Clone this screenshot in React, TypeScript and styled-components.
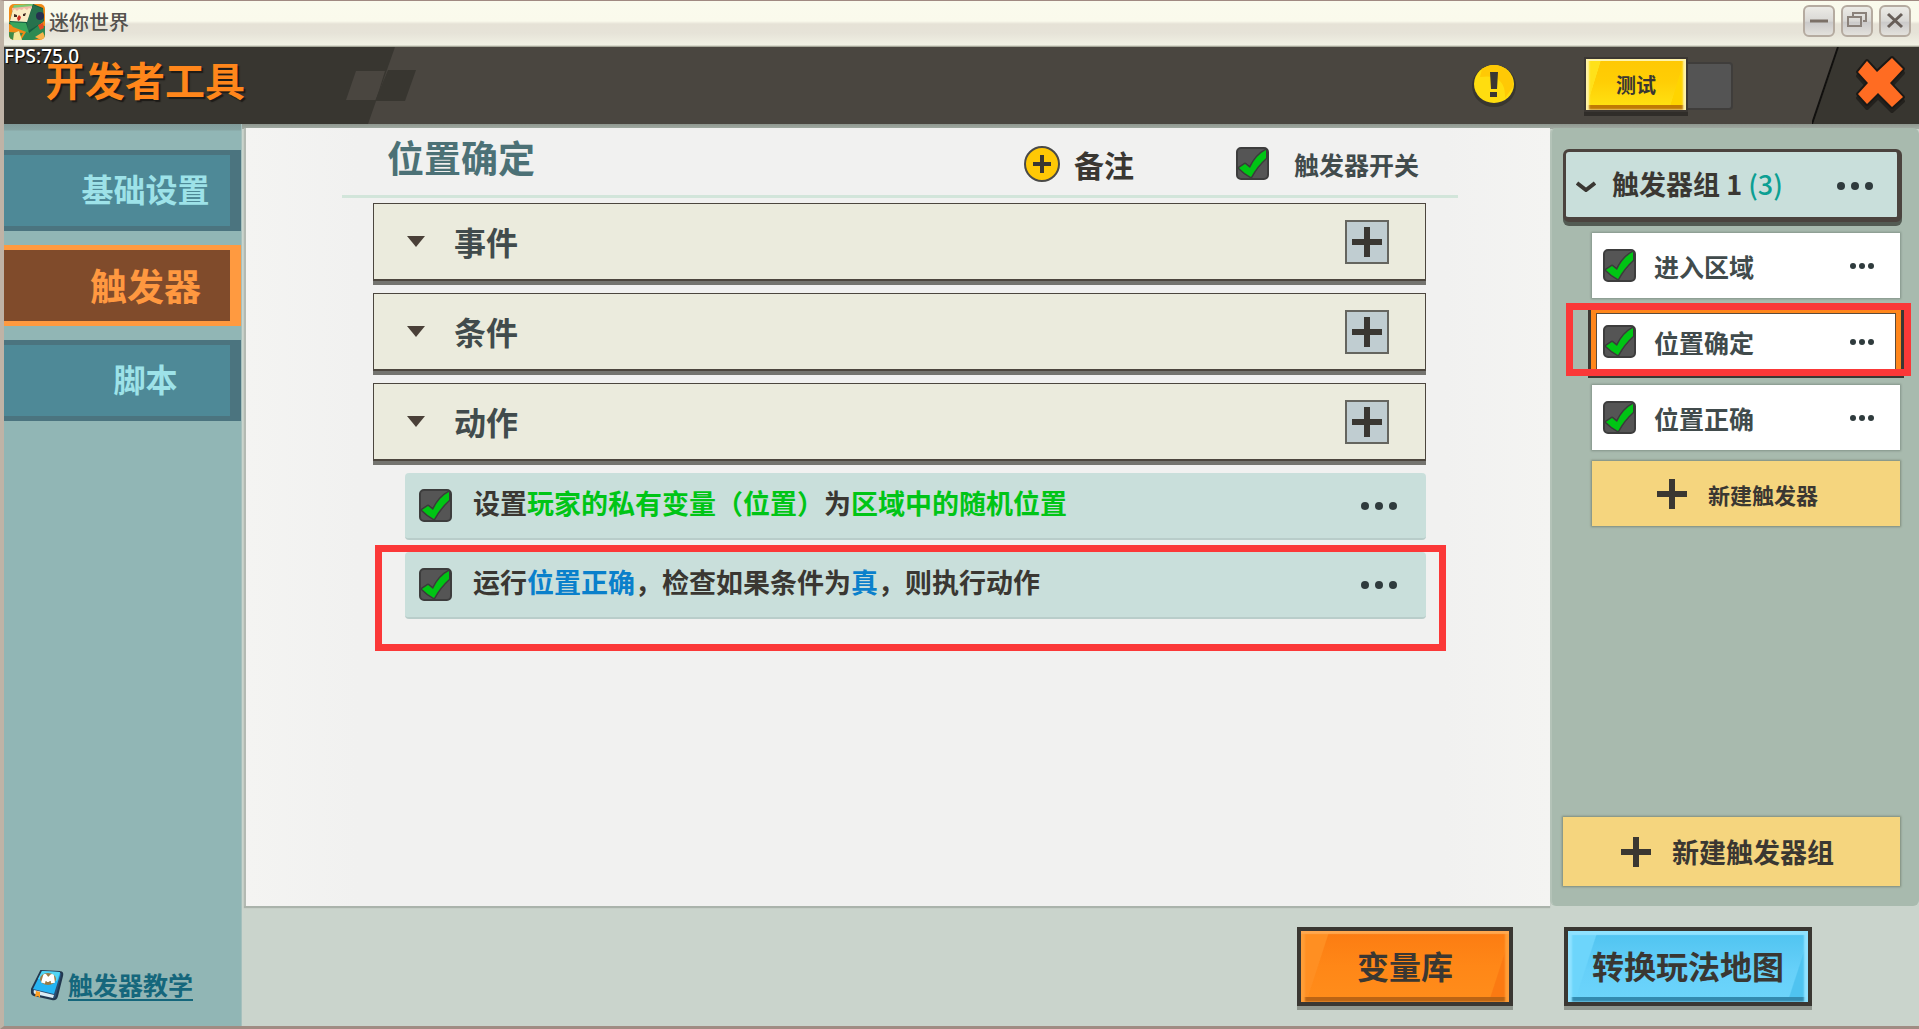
import React from "react";
import styled, { createGlobalStyle, css } from "styled-components";

const INK = "#3a3732";
const SLATE = "#414b4c";

const GlobalStyle = createGlobalStyle`
  * { box-sizing: border-box; }
  html, body { margin: 0; padding: 0; }
  body {
    font-family: "Noto Sans CJK SC", "Noto Sans", sans-serif;
    font-weight: 700;
    color: ${INK};
  }
  button, input { font: inherit; color: inherit; margin: 0; }
  button { padding: 0; border: 0; background: none; cursor: pointer; }
  h1, h2, h3, p, ul { margin: 0; padding: 0; font-size: inherit; font-weight: inherit; }
  ul { list-style: none; }
  svg { display: block; flex: none; }
`;

/* ---------- window frame ---------- */

const Window = styled.div`
  min-height: 100vh;
  display: flex;
  flex-direction: column;
  border-top: 1px solid #a08a82;
  border-left: 4px solid #bfb3a6;
  border-bottom: 3px solid #a08c83;
  background: #cad4cc;
`;

const TitleBar = styled.header`
  height: 46px;
  display: flex;
  align-items: flex-start;
  padding: 3px 8px 0 5px;
  background: linear-gradient(#fafbed 0, #fafaec 20px, #e6e2d6 23px, #e6e3d8 32px, #f1f1e4 44px, #8d8f80 46px);
`;

const WindowName = styled.span`
  flex: 1;
  padding-left: 4px;
  font-size: 20px;
  line-height: 36px;
  font-weight: 500;
  color: #55524e;
`;

const WindowButtons = styled.div`
  display: flex;
  gap: 6px;
  padding-top: 1px;
`;

const WindowButton = styled.button`
  width: 32px;
  height: 32px;
  display: grid;
  place-items: center;
  border: 2px solid #b5aba0;
  border-radius: 6px;
  background: linear-gradient(#ecebe6, #d9d8d5 50%, #cbcaca 55%, #e3e1dc);
`;

/* ---------- tool header ---------- */

const ToolHeader = styled.div`
  position: relative;
  height: 77px;
  display: flex;
  background: #4a4640;
`;

const Fps = styled.span`
  position: absolute;
  left: 0;
  top: -2px;
  font-family: "Noto Sans", sans-serif;
  font-size: 19px;
  line-height: 22px;
  font-weight: 500;
  color: #fff;
  text-shadow: 1px 1px 1px #000;
`;

const Brand = styled.h1`
  width: 342px;
  padding-left: 41px;
  font-size: 40px !important;
  line-height: 64px;
  color: #ff861b;
  background: #383630;
  text-shadow: 2px 2px 1px #1d1b18;
`;

const HeaderTools = styled.div`
  flex: 1;
  display: flex;
  justify-content: flex-end;
  align-items: flex-start;
`;

const NoticeButton = styled.button`
  margin: 16px 68px 0 0;
`;

const TestSwitch = styled.div`
  display: flex;
  align-items: flex-start;
  padding-top: 10px;
  margin-right: 79px;
`;

const TestButton = styled.button`
  width: 104px;
  height: 55px;
  border: 2px solid #3b3733;
  box-shadow: inset 0 2px 0 #fff3a8, inset 3px 0 2px #fff3a8, inset -3px 0 2px #fff3a8, inset 0 -5px 0 #c07a04, 0 4px 0 #302d29;
  background: linear-gradient(107deg, #ffe11a 0 13%, transparent 13.5% 85%, #ffd400 85.5%),
    linear-gradient(#ffc803, #ffce05 45%, #ffe011 90%);
  font-size: 20px;
  line-height: 50px;
`;

const SwitchSlot = styled.span`
  width: 45px;
  height: 48px;
  margin-top: 5px;
  border: 2px solid #3f3d3b;
  border-left: 0;
  border-radius: 0 4px 4px 0;
  background: #545454;
`;

const CloseCell = styled.div`
  width: 79px;
  padding: 7px 0 0 14px;
  background: #383630;
`;

/* ---------- body ---------- */

const Body = styled.div`
  flex: 1;
  display: flex;
  background: linear-gradient(#8f978f, #a3ada5 5px, transparent 5px);
`;

const Sidebar = styled.nav`
  width: 238px;
  display: flex;
  flex-direction: column;
  justify-content: space-between;
  padding: 26px 0 25px;
  border-right: 1px solid #a5c0bd;
  background: linear-gradient(#819b99, #87a5a3 6px, #91b6b5 7px);
`;

const Tabs = styled.div`
  display: grid;
  gap: 14px;
`;

const Tab = styled.button<{ $active?: boolean }>`
  height: 81px;
  padding: 0 20px 6px 77px;
  border: solid #4b747f;
  border-width: 5px 11px 5px 0;
  background: #4e8997;
  color: #9de2e8;
  font-size: 32px;
  line-height: 64px;
  text-align: center;
  white-space: nowrap;
  ${(p) =>
    p.$active &&
    css`
      padding-bottom: 2px;
      border-color: #ff9a40;
      background: #804b2b;
      color: #ff9840;
      font-size: 37px;
    `}
`;

const GuideLink = styled.a`
  display: flex;
  align-items: center;
  gap: 4px;
  padding-left: 27px;
  color: #15677c;
  font-size: 25px;
  line-height: 30px;
  text-decoration: none;
  span { border-bottom: 2px solid #15677c; }
`;

const Workspace = styled.div`
  flex: 1;
  min-width: 0;
  display: flex;
  flex-direction: column;
`;

const Panels = styled.div`
  flex: 1;
  display: flex;
  padding-top: 4px;
`;

const Editor = styled.main`
  flex: 1;
  min-width: 0;
  margin-left: 2px;
  padding: 0 92px 0 96px;
  border-left: 2px solid #b3bab3;
  box-shadow: 0 2px 1px #aab3ab;
  background: linear-gradient(90deg, #f4f4f2, #f1f1f0 112px, #f1f1f0 1199px, #f4f4f2);
`;

const EditorHead = styled.div`
  height: 70px;
  display: flex;
  align-items: center;
  padding: 4px 39px 0 45px;
  border-bottom: 3px solid #d2e5da;
`;

const EditorTitle = styled.h2`
  flex: 1;
  align-self: flex-start;
  font-size: 37px !important;
  line-height: 50px;
  color: #4c7176;
`;

const NoteButton = styled.button`
  display: flex;
  align-items: center;
  gap: 14px;
  margin-right: 102px;
  font-size: 30px;
  line-height: 36px;
`;

const SwitchLabel = styled.label`
  display: flex;
  align-items: center;
  gap: 25px;
  font-size: 25px;
  line-height: 32px;
  color: ${SLATE};
`;

const Sections = styled.div`
  display: grid;
  gap: 12px;
  padding: 5px 32px 0 31px;
`;

const Section = styled.section`
  height: 78px;
  display: flex;
  align-items: center;
  padding: 0 36px 0 33px;
  border: 1px solid #4c463e;
  border-bottom-width: 2px;
  background: #ebebdd;
  box-shadow: 0 4px 0 #74746f;
`;

const SectionName = styled.h3`
  flex: 1;
  padding: 0 0 2px 29px;
  font-size: 32px !important;
  line-height: 40px;
  color: ${SLATE};
`;

const AddButton = styled.button`
  width: 44px;
  height: 44px;
  display: grid;
  place-items: center;
  border: 2px solid #65655f;
  background: #c0cdd1;
`;

const Actions = styled.ul`
  display: grid;
  gap: 12px;
  padding-left: 32px;
`;

const Action = styled.li`
  position: relative;
  height: 67px;
  display: flex;
  align-items: center;
  padding: 0 29px 0 14px;
  border-radius: 4px;
  border-bottom: 2px solid #b9cdca;
  background: #c9dfdb;
`;

const ActionText = styled.label`
  flex: 1;
  padding: 0 0 6px 21px;
  font-size: 27px;
  line-height: 36px;
`;

const Word = styled.span<{ $tone: "green" | "blue" }>`
  color: ${(p) => (p.$tone === "green" ? "#00c516" : "#0a80cb")};
`;

const Highlight = styled.i<{ $inset: string }>`
  position: absolute;
  inset: ${(p) => p.$inset};
  z-index: 2;
  border: 7px solid #fb3838;
  pointer-events: none;
`;

const MoreButton = styled.button`
  display: grid;
  place-items: center;
  height: 32px;
`;

/* ---------- trigger list ---------- */

const Triggers = styled.aside`
  width: 369px;
  display: flex;
  flex-direction: column;
  padding: 21px 19px 20px 11px;
  border-radius: 6px;
  border-left: 2px solid #b4c3b8;
  background: #a8baae;
`;

const Group = styled.div`
  height: 73px;
  display: flex;
  align-items: center;
  padding: 3px 24px 0 10px;
  margin-right: -2px;
  border: solid #4b433e;
  border-width: 3px 5px 5px 3px;
  border-radius: 6px;
  background: #c9dfdb;
  box-shadow: 0 4px 0 #535b53;
`;

const GroupName = styled.h3`
  flex: 1;
  padding: 0 0 4px 16px;
  font-size: 27px !important;
  line-height: 36px;
  span { color: #0c9f93; font-weight: 500; }
`;

const TriggerItems = styled.ul`
  display: grid;
  gap: 11px;
  padding: 11px 0 0 29px;
`;

const TriggerItem = styled.li<{ $selected?: boolean }>`
  position: relative;
  height: 65px;
  display: flex;
  align-items: center;
  padding: 0 26px 0 11px;
  background: #fff;
  box-shadow: 0 0 2px 1px #84948a;
  ${(p) =>
    p.$selected &&
    css`
      box-shadow: 0 0 0 1px #ff861b, 0 0 0 4px #3b3833, inset 0 0 0 4px #ff861b, inset 0 0 0 5px #5c4b3b;
    `}
`;

const TriggerName = styled.label`
  flex: 1;
  padding-left: 18px;
  font-size: 25px;
  line-height: 34px;
  color: ${SLATE};
`;

const NewButton = styled.button<{ $large?: boolean }>`
  display: flex;
  align-items: center;
  width: 100%;
  gap: 21px;
  height: ${(p) => (p.$large ? 69 : 65)}px;
  padding-left: ${(p) => (p.$large ? 58 : 65)}px;
  background: #f5d57e;
  box-shadow: 0 0 2px 1px #7f8c7c;
  font-size: ${(p) => (p.$large ? 27 : 22)}px;
  line-height: 36px;
`;

const Spacer = styled.div`
  flex: 1;
`;

/* ---------- footer ---------- */

const Footer = styled.footer`
  height: 120px;
  display: flex;
  justify-content: flex-end;
  align-items: flex-start;
  gap: 51px;
  padding: 21px 107px 0 0;
`;

const GlossButton = styled.button<{ $tone: "orange" | "blue" }>`
  height: 79px;
  padding: 0 ${(p) => (p.$tone === "orange" ? 56 : 24)}px 4px;
  border: 4px solid ${INK};
  font-size: 32px;
  line-height: 64px;
  ${(p) =>
    p.$tone === "orange"
      ? css`
          background: linear-gradient(108deg, #ff8f22 0 12%, transparent 12.5% 91%, #fb7a12 91.5%),
            linear-gradient(#fc7c12, #ff8717 50%, #ff8d1b);
          box-shadow: inset 0 3px 1px #ffa84f, inset 4px 0 2px #ff9d36, inset -4px 0 2px #ff9d36, inset 0 -5px 0 #bb6414, 0 4px 0 #90978f;
        `
      : css`
          background: linear-gradient(108deg, #6dd5fb 0 11%, transparent 11.5% 92%, #4fc3f0 92.5%),
            linear-gradient(#4fc3f0, #66d0f9 55%, #6dd5fb);
          box-shadow: inset 0 4px 1px #8fe2ff, inset 4px 0 2px #8fe2ff, inset -4px 0 2px #8fe2ff, inset 0 -5px 0 #338bb0, 0 4px 0 #90978f;
        `}
`;

/* ---------- small drawings and controls ---------- */

const CheckWrap = styled.span`
  width: 33px;
  height: 33px;
  flex: none;
  display: grid;
  > * { grid-area: 1 / 1; }
  svg { pointer-events: none; }
`;

const CheckInput = styled.input`
  appearance: none;
  width: 33px;
  height: 33px;
  border: 2px solid #3d3d3d;
  border-radius: 5px;
  background: #555;
  &:not(:checked) + svg { visibility: hidden; }
`;

function Check({ id }: { id: string }) {
  return (
    <CheckWrap>
      <CheckInput type="checkbox" id={id} defaultChecked />
      <svg width="33" height="33" viewBox="0 0 33 33" aria-hidden="true">
        <path d="M3 21 L9 17 L14 21 Q20 8 30 3 L30 11 Q21 19 15 30 Q9 27 3 21Z" fill="#00c514" stroke="#3b3b3b" strokeWidth="3" strokeLinejoin="round" paintOrder="stroke" />
      </svg>
    </CheckWrap>
  );
}

function Dots({ r = 4, pitch = 14 }: { r?: number; pitch?: number }) {
  const w = pitch * 2 + r * 2;
  return (
    <svg width={w} height={r * 2} aria-hidden="true" fill="#2f3b3d">
      {[0, 1, 2].map((i) => (
        <circle key={i} cx={r + pitch * i} cy={r} r={r} />
      ))}
    </svg>
  );
}

function Plus() {
  return (
    <svg width="30" height="30" viewBox="0 0 30 30" aria-hidden="true">
      <path d="M0 15H30M15 0V30" stroke={INK} strokeWidth="6" />
    </svg>
  );
}

function Avatar() {
  return (
    <svg width="36" height="36" viewBox="0 0 36 36" aria-hidden="true">
      <defs>
        <clipPath id="avatarClip">
          <rect width="36" height="36" rx="5" />
        </clipPath>
      </defs>
      <g clipPath="url(#avatarClip)">
        <rect width="36" height="36" fill="#f08a17" />
        <path d="M0 28L14 29L10 36H0Z" fill="#3e8b49" />
        <path d="M22 20L36 22V33L24 36H12Z" fill="#2c8a52" />
        <path d="M5 2L24 0L34 4L35 17L20 29L16 24L0 20Z" fill="#145c41" />
        <path d="M24 1L34 5V18L19 27L18 19Z" fill="#27724d" />
        <path d="M5 1L24 0L22 5L3 6Z" fill="#7acb72" />
        <path d="M4 5L23 3L18 18L1 17Z" fill="#f9ecc4" />
        <path d="M3 4L23 2L22 5l-2-1-2 2-3-2-2 2-3-1-2 2-2-2-3 2Z" fill="#f2b9a4" />
        <path d="M5 10l3 1v2H5ZM14 10l3-1-1 3h-2Z" fill="#402a22" />
        <path d="M8 14l2-3 2 2-1 3-2 1Z" fill="#cf2f24" />
        <path d="M0 18L17 19L20 29L4 23Z" fill="#38a65d" />
        <path d="M5 29l5-2 3 9H4Z" fill="#f4e79a" />
        <circle cx="31" cy="12" r="4" fill="#26304f" />
        <path d="M29 21l5-2 1 5-4 2Z" fill="#e24a22" />
        <path d="M26 33l8-5 2 5-4 3Z" fill="#f7b44c" />
      </g>
    </svg>
  );
}

function GuideBook() {
  return (
    <svg width="33" height="32" viewBox="0 0 33 32" aria-hidden="true">
      <path d="M10 2L29 3Q32 3 31 7L26 27Q25 31 21 30L3 26Q0 25 1 20Z" fill="#2b4d72" stroke="#22374e" strokeWidth="2" />
      <path d="M3 21L23 26L22 29L4 25Q2 24 3 21Z" fill="#dcecf4" />
      <path d="M11 2L28 3Q30 4 29 6L23 25L2 20Z" fill="#25b4f3" />
      <path d="M11 2L29 3L26 12L7 10Z" fill="#52d5f4" />
      <ellipse cx="17" cy="10" rx="8" ry="6" fill="#9c7a44" />
      <path d="M12 14L14 7L17 11L21 7L22 14" fill="none" stroke="#fff" strokeWidth="4" strokeLinejoin="round" />
      <path d="M5 22L9 23V29L7 27L4 28Z" fill="#ff9f22" />
    </svg>
  );
}

const sections = ["事件", "条件", "动作"];
const triggers = [
  { name: "进入区域", selected: false },
  { name: "位置确定", selected: true },
  { name: "位置正确", selected: false },
];

export default function App() {
  return (
    <>
      <GlobalStyle />
      <Window>
        <TitleBar>
          <Avatar />
          <WindowName>迷你世界</WindowName>
          <WindowButtons>
            <WindowButton aria-label="最小化">
              <svg width="20" height="20"><path d="M1 10H19" stroke="#7b7067" strokeWidth="3" /></svg>
            </WindowButton>
            <WindowButton aria-label="还原">
              <svg width="20" height="20" fill="none" stroke="#8a817a" strokeWidth="2">
                <path d="M6 5V2H19V10H16" />
                <rect x="1" y="6" width="13" height="9" />
              </svg>
            </WindowButton>
            <WindowButton aria-label="关闭">
              <svg width="20" height="20"><path d="M3 3L17 16M17 3L3 16" stroke="#675e58" strokeWidth="3" /></svg>
            </WindowButton>
          </WindowButtons>
        </TitleBar>

        <ToolHeader>
          <Brand>开发者工具</Brand>
          <svg width="80" height="77" viewBox="0 0 80 77" aria-hidden="true">
            <path d="M0 0H49L22 77H0Z" fill="#383630" />
            <path d="M10 24H39L30 53H0Z" fill="#4a4640" />
            <path d="M42 23H70L59 54H29Z" fill="#383630" />
          </svg>
          <Fps>FPS:75.0</Fps>
          <HeaderTools>
            <NoticeButton aria-label="提示">
              <svg width="44" height="44" viewBox="0 0 44 44">
                <ellipse cx="22" cy="23" rx="22" ry="21" fill="#383630" />
                <ellipse cx="22" cy="21" rx="20" ry="19" fill="#ffdd0f" />
                <path d="M10 6Q22 -2 34 6Q42 13 41 24L33 35Q34 10 8 14Z" fill="#ffc905" />
                <path d="M18 9H26L25 26H19ZM18 29H25V34H18Z" fill={INK} />
              </svg>
            </NoticeButton>
            <TestSwitch>
              <TestButton>测试</TestButton>
              <SwitchSlot />
            </TestSwitch>
          </HeaderTools>
          <svg width="28" height="77" viewBox="0 0 28 77" aria-hidden="true">
            <path d="M27 0H28V77H1Z" fill="#383630" />
            <path d="M26 0L0 77" stroke="#11100e" strokeWidth="2" />
          </svg>
          <CloseCell>
            <button aria-label="关闭开发者工具">
              <svg width="54" height="62" viewBox="0 0 54 62">
                <path d="M4 18L13 7L23 18L38 4L49 15L36 29L49 43L38 53L24 39L13 50L4 40L14 29Z" transform="translate(0 4)" fill="#23211d" stroke="#23211d" strokeWidth="4" strokeLinejoin="round" />
                <path d="M4 18L13 7L23 18L38 4L49 15L36 29L49 43L38 53L24 39L13 50L4 40L14 29Z" fill="#ff6c22" stroke="#1b1916" strokeWidth="4" strokeLinejoin="round" paintOrder="stroke" />
              </svg>
            </button>
          </CloseCell>
        </ToolHeader>

        <Body>
          <Sidebar>
            <Tabs>
              <Tab>基础设置</Tab>
              <Tab $active>触发器</Tab>
              <Tab>脚本</Tab>
            </Tabs>
            <GuideLink href="#guide">
              <GuideBook />
              <span>触发器教学</span>
            </GuideLink>
          </Sidebar>

          <Workspace>
            <Panels>
              <Editor>
                <EditorHead>
                  <EditorTitle>位置确定</EditorTitle>
                  <NoteButton>
                    <svg width="36" height="36" viewBox="0 0 36 36" aria-hidden="true">
                      <circle cx="18" cy="18" r="17" fill="#ffc805" stroke="#4a4a48" strokeWidth="2" />
                      <path d="M9 18H27M18 9V27" stroke={INK} strokeWidth="4" />
                    </svg>
                    备注
                  </NoteButton>
                  <SwitchLabel htmlFor="trigger-on">
                    <Check id="trigger-on" />
                    触发器开关
                  </SwitchLabel>
                </EditorHead>

                <Sections>
                  {sections.map((name) => (
                    <Section key={name}>
                      <svg width="18" height="11" aria-hidden="true"><path d="M0 0H18L9 11Z" fill="#4a4038" /></svg>
                      <SectionName>{name}</SectionName>
                      <AddButton aria-label={`添加${name}`}><Plus /></AddButton>
                    </Section>
                  ))}
                  <Actions>
                    <Action>
                      <Check id="action-1" />
                      <ActionText htmlFor="action-1">
                        设置<Word $tone="green">玩家的私有变量（位置）</Word>为<Word $tone="green">区域中的随机位置</Word>
                      </ActionText>
                      <MoreButton aria-label="更多"><Dots /></MoreButton>
                    </Action>
                    <Action>
                      <Check id="action-2" />
                      <ActionText htmlFor="action-2">
                        运行<Word $tone="blue">位置正确</Word>，检查如果条件为<Word $tone="blue">真</Word>，则执行动作
                      </ActionText>
                      <MoreButton aria-label="更多"><Dots /></MoreButton>
                      <Highlight $inset="-7px -20px -34px -30px" />
                    </Action>
                  </Actions>
                </Sections>
              </Editor>

              <Triggers>
                <Group>
                  <svg width="20" height="11" viewBox="0 0 20 11" aria-hidden="true">
                    <path d="M1 2L10 9L19 2" fill="none" stroke={INK} strokeWidth="4" />
                  </svg>
                  <GroupName>触发器组 1 <span>(3)</span></GroupName>
                  <MoreButton aria-label="更多"><Dots /></MoreButton>
                </Group>
                <TriggerItems>
                  {triggers.map((t, i) => (
                    <TriggerItem key={t.name} $selected={t.selected}>
                      <Check id={`trigger-${i}`} />
                      <TriggerName htmlFor={`trigger-${i}`}>{t.name}</TriggerName>
                      <MoreButton aria-label="更多"><Dots r={3} pitch={9} /></MoreButton>
                      {t.selected && <Highlight $inset="-6px -11px -2px -26px" />}
                    </TriggerItem>
                  ))}
                  <li>
                    <NewButton><Plus />新建触发器</NewButton>
                  </li>
                </TriggerItems>
                <Spacer />
                <NewButton $large><Plus />新建触发器组</NewButton>
              </Triggers>
            </Panels>

            <Footer>
              <GlossButton $tone="orange">变量库</GlossButton>
              <GlossButton $tone="blue">转换玩法地图</GlossButton>
            </Footer>
          </Workspace>
        </Body>
      </Window>
    </>
  );
}
